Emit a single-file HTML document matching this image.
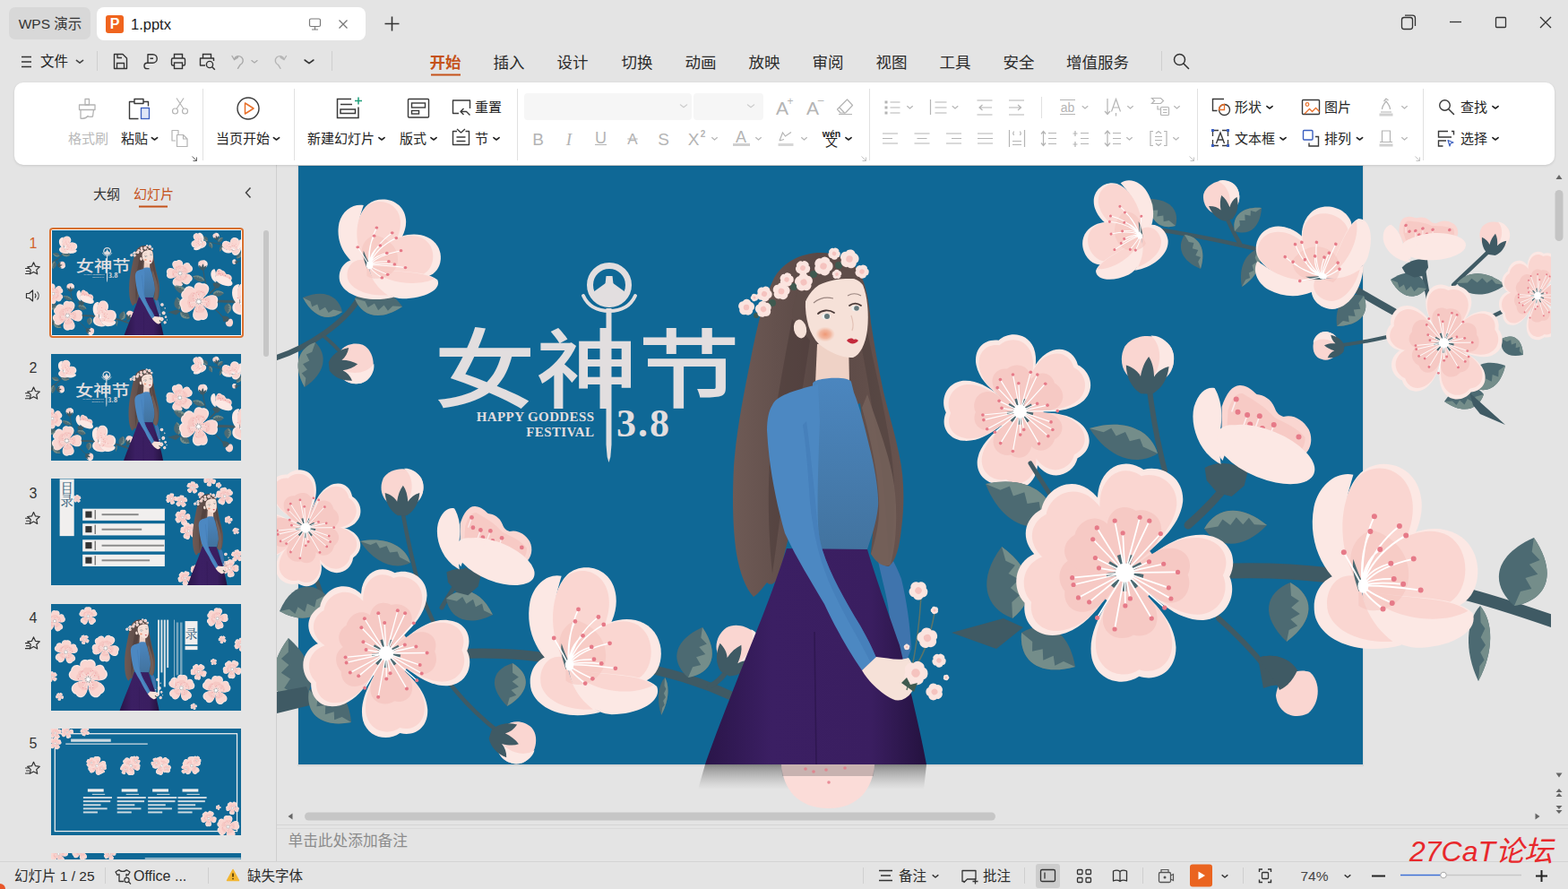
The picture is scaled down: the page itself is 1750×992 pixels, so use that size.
<!DOCTYPE html>
<html lang="zh-CN"><head><meta charset="utf-8"><title>1.pptx - WPS 演示</title>
<style>

*{box-sizing:border-box;margin:0;padding:0}
html,body{width:1750px;height:992px;overflow:hidden}
body{position:relative;background:#e4e4e4;font-family:"Liberation Sans","Noto Sans CJK SC",sans-serif;color:#2b2b2b;font-size:15px}
.abs{position:absolute}
.t{position:absolute;white-space:nowrap;line-height:1;transform:translateY(-50%)}
.vsep{position:absolute;width:1px;background:#d2d2d2}
svg{overflow:visible}
.ic{position:absolute;overflow:visible}
#tab1{left:10px;top:8px;width:91px;height:36px;background:#d8d8d8;border-radius:7px}
#tab2{left:108px;top:8px;width:300px;height:37px;background:#fff;border-radius:8px}
#picon{left:118px;top:17px;width:20px;height:20px;background:#f0641e;border-radius:3px;color:#fff;font-weight:bold;font-size:16px;text-align:center;line-height:20px}
.menu{font-size:17.5px;color:#2b2b2b}
.menu.act{color:#c5521a;font-weight:bold}
#ribbon{left:16px;top:92px;width:1719px;height:92px;background:#fff;border-radius:10px;box-shadow:0 1px 3px rgba(0,0,0,.12)}
.rl{font-size:15px;color:#222}
.rl.dis{color:#b9b9b9}
.fbox{position:absolute;background:#f6f6f6;border-radius:4px}
#leftpanel{left:0;top:184px;width:308px;height:776px;background:#e4e4e4}
#pdiv{left:308px;top:184px;width:1px;height:777px;background:#cfcfcf}
.tn{position:absolute;font-size:16px;color:#333;transform:translate(-50%,-50%);line-height:1}
#status{left:0;top:961px;width:1750px;height:31px;background:#e4e4e4;border-top:1px solid #d4d4d4}
.st{font-size:15.5px;color:#2b2b2b}
#notes{left:309px;top:920px;width:1441px;height:41px;background:#e4e4e4;border-top:1px solid #d4d4d4;box-shadow:inset 0 3px 0 #e4e4e4,inset 0 4px 0 #dadada}

</style></head>
<body>
<svg width="0" height="0" style="position:absolute">
<defs>
<g id="f5"><path d="M0 0C-.05-.14-.41-.38-.39-.72C-.37-.93-.2-1.02-.03-.95C.12-1.03.35-.96.38-.74C.41-.42.06-.14 0 0Z" transform="rotate(0)" fill="#fce8e4"/><path d="M0 0C-.05-.14-.41-.38-.39-.72C-.37-.93-.2-1.02-.03-.95C.12-1.03.35-.96.38-.74C.41-.42.06-.14 0 0Z" transform="rotate(80)" fill="#fce8e4"/><path d="M0 0C-.05-.14-.41-.38-.39-.72C-.37-.93-.2-1.02-.03-.95C.12-1.03.35-.96.38-.74C.41-.42.06-.14 0 0Z" transform="rotate(160)" fill="#fce8e4"/><path d="M0 0C-.05-.14-.41-.38-.39-.72C-.37-.93-.2-1.02-.03-.95C.12-1.03.35-.96.38-.74C.41-.42.06-.14 0 0Z" transform="rotate(238)" fill="#fce8e4"/><path d="M0 0C-.05-.14-.41-.38-.39-.72C-.37-.93-.2-1.02-.03-.95C.12-1.03.35-.96.38-.74C.41-.42.06-.14 0 0Z" transform="rotate(298)" fill="#fce8e4"/><path d="M0 0C-.05-.14-.41-.38-.39-.72C-.37-.93-.2-1.02-.03-.95C.12-1.03.35-.96.38-.74C.41-.42.06-.14 0 0Z" transform="rotate(0) translate(-.01 -.005) scale(.9 .93)" fill="#fad6d1"/><path d="M0 0C-.05-.14-.41-.38-.39-.72C-.37-.93-.2-1.02-.03-.95C.12-1.03.35-.96.38-.74C.41-.42.06-.14 0 0Z" transform="rotate(80) translate(-.01 -.005) scale(.9 .93)" fill="#fad6d1"/><path d="M0 0C-.05-.14-.41-.38-.39-.72C-.37-.93-.2-1.02-.03-.95C.12-1.03.35-.96.38-.74C.41-.42.06-.14 0 0Z" transform="rotate(160) translate(-.01 -.005) scale(.9 .93)" fill="#fad6d1"/><path d="M0 0C-.05-.14-.41-.38-.39-.72C-.37-.93-.2-1.02-.03-.95C.12-1.03.35-.96.38-.74C.41-.42.06-.14 0 0Z" transform="rotate(238) translate(-.01 -.005) scale(.9 .93)" fill="#fad6d1"/><path d="M0 0C-.05-.14-.41-.38-.39-.72C-.37-.93-.2-1.02-.03-.95C.12-1.03.35-.96.38-.74C.41-.42.06-.14 0 0Z" transform="rotate(298) translate(-.01 -.005) scale(.9 .93)" fill="#fad6d1"/><circle r=".3" fill="#fad6d1"/><g opacity=".6"><path d="M0 0C-.05-.14-.41-.38-.39-.72C-.37-.93-.2-1.02-.03-.95C.12-1.03.35-.96.38-.74C.41-.42.06-.14 0 0Z" transform="rotate(0) scale(.64 .6)" fill="#f4c1bc"/><path d="M0 0C-.05-.14-.41-.38-.39-.72C-.37-.93-.2-1.02-.03-.95C.12-1.03.35-.96.38-.74C.41-.42.06-.14 0 0Z" transform="rotate(80) scale(.64 .6)" fill="#f4c1bc"/><path d="M0 0C-.05-.14-.41-.38-.39-.72C-.37-.93-.2-1.02-.03-.95C.12-1.03.35-.96.38-.74C.41-.42.06-.14 0 0Z" transform="rotate(160) scale(.64 .6)" fill="#f4c1bc"/><path d="M0 0C-.05-.14-.41-.38-.39-.72C-.37-.93-.2-1.02-.03-.95C.12-1.03.35-.96.38-.74C.41-.42.06-.14 0 0Z" transform="rotate(238) scale(.64 .6)" fill="#f4c1bc"/><path d="M0 0C-.05-.14-.41-.38-.39-.72C-.37-.93-.2-1.02-.03-.95C.12-1.03.35-.96.38-.74C.41-.42.06-.14 0 0Z" transform="rotate(298) scale(.64 .6)" fill="#f4c1bc"/></g><g id="stam"><path d="M0 0L0.167 0.034M0 0L0.106 0.133M0 0L-0.004 0.170M0 0L-0.113 0.127M0 0L-0.168 0.025M0 0L-0.145 -0.089M0 0L-0.054 -0.161M0 0L0.062 -0.158M0 0L0.149 -0.081" stroke="#4c6a72" stroke-width=".035" fill="none"/><path d="M0 0L0.480 -0.005M0 0L0.397 0.137M0 0L0.418 0.236M0 0L0.360 0.318M0 0L0.242 0.415M0 0L0.048 0.235M0 0L0.003 0.300M0 0L-0.093 0.512M0 0L-0.251 0.409M0 0L-0.324 0.267M0 0L-0.423 0.227M0 0L-0.467 0.110M0 0L-0.478 0.046M0 0L-0.236 -0.042M0 0L-0.269 -0.134M0 0L-0.291 -0.303M0 0L-0.254 -0.407M0 0L-0.092 -0.471M0 0L-0.019 -0.359M0 0L0.135 -0.502M0 0L0.222 -0.470M0 0L0.324 -0.354M0 0L0.219 -0.099M0 0L0.351 -0.079" stroke="#fff" stroke-width=".014" fill="none"/><g fill="#e67a88"><circle cx="0.480" cy="-0.005" r=".021"/><circle cx="0.397" cy="0.137" r=".021"/><circle cx="0.418" cy="0.236" r=".021"/><circle cx="0.360" cy="0.318" r=".021"/><circle cx="0.242" cy="0.415" r=".021"/><circle cx="0.048" cy="0.235" r=".021"/><circle cx="0.003" cy="0.300" r=".021"/><circle cx="-0.093" cy="0.512" r=".021"/><circle cx="-0.251" cy="0.409" r=".021"/><circle cx="-0.324" cy="0.267" r=".021"/><circle cx="-0.423" cy="0.227" r=".021"/><circle cx="-0.467" cy="0.110" r=".021"/><circle cx="-0.478" cy="0.046" r=".021"/><circle cx="-0.236" cy="-0.042" r=".021"/><circle cx="-0.269" cy="-0.134" r=".021"/><circle cx="-0.291" cy="-0.303" r=".021"/><circle cx="-0.254" cy="-0.407" r=".021"/><circle cx="-0.092" cy="-0.471" r=".021"/><circle cx="-0.019" cy="-0.359" r=".021"/><circle cx="0.135" cy="-0.502" r=".021"/><circle cx="0.222" cy="-0.470" r=".021"/><circle cx="0.324" cy="-0.354" r=".021"/><circle cx="0.219" cy="-0.099" r=".021"/><circle cx="0.351" cy="-0.079" r=".021"/></g><circle r=".085" fill="#fff"/></g></g>
<path id="po" d="M0 0C-.05-.14-.41-.38-.39-.72C-.37-.93-.2-1.02-.03-.95C.12-1.03.35-.96.38-.74C.41-.42.06-.14 0 0Z" fill="#fce8e4"/><path id="pm" d="M0 0C-.05-.14-.41-.38-.39-.72C-.37-.93-.2-1.02-.03-.95C.12-1.03.35-.96.38-.74C.41-.42.06-.14 0 0Z" transform="translate(-.01 -.005) scale(.9 .93)" fill="#fad6d1"/><path id="pi" d="M0 0C-.05-.14-.41-.38-.39-.72C-.37-.93-.2-1.02-.03-.95C.12-1.03.35-.96.38-.74C.41-.42.06-.14 0 0Z" transform="scale(.64 .6)" fill="#f4c1bc"/>
<g id="cup"><path d="M-6 10C-40-5-62-45-54-88C-48-114-28-128-10-124C-17-100-23-80-19-58C-15-35-8-15-6 10Z" fill="#fce8e4"/><path d="M0 0C-28-28-30-98-2-126C20-146 62-136 66-96C70-60 40-20 0 0Z" fill="#fce8e4"/><path d="M0 0C-28-28-30-98-2-124C18-140 52-130 56-94C60-60 36-20 0 0Z" fill="#fad6d1"/><path d="M0 0C20-50 70-76 105-58C136-42 136 6 110 21C80 36 30 25 0 0Z" fill="#fce8e4"/><path d="M0 0C20-48 66-72 96-56C122-40 120 4 98 18C74 30 30 24 0 0Z" fill="#fad6d1"/><path d="M0 4C40 16 100 8 123 30C131 50 100 69 60 69C30 67 4 40 0 4Z" fill="#fce8e4"/><path d="M0 4C40 16 96 10 118 28C90 44 30 40 0 4Z" fill="#fad6d1"/><path d="M-4-12C-40-22-60 8-52 36C-42 64 0 78 44 66C22 52 0 30-4-12Z" fill="#fce8e4"/><path d="M-4-10C-30-18-44 8-38 30C-30 52 0 64 34 62C16 48 0 28-4-10Z" fill="#fad6d1"/><path d="M-4 0C-22-25-12-58 12-62C38-54 58-30 50 0C42 26 12 34-4 22Z" fill="#f4c1bc" opacity=".5"/><path d="M-10-30C-6-18-2-8 4 4L-4 6C-8-6-12-18-10-30Z" fill="#4c6a72"/><path d="M0 0Q-1.3 -46.7 13.5 -77.6M0 0Q-2.9 -37.4 9 -60.7M0 0Q8.5 -40.8 41.5 -66.9M0 0Q11.1 -35.0 48.8 -56.4M0 0Q0.9 -26.5 19.8 -40.9M0 0Q-13.2 -24.6 -20.6 -37.5M0 0Q5.2 -17.8 31.9 -25.1M0 0Q14.1 -20.6 57.3 -30.2M0 0Q6.4 -8.3 35.3 -7.9M0 0Q10.0 -5.1 45.7 -2M0 0Q16.8 -1.4 65.2 4.8M0 0Q5.7 6.6 33.3 19.2M0 0Q2.1 10.1 23.1 25.7" stroke="#fff" stroke-width="1.9" fill="none"/><g fill="#e67a88"><circle cx="13.5" cy="-77.6" r="3"/><circle cx="9" cy="-60.7" r="3"/><circle cx="41.5" cy="-66.9" r="3"/><circle cx="48.8" cy="-56.4" r="3"/><circle cx="19.8" cy="-40.9" r="3"/><circle cx="-20.6" cy="-37.5" r="3"/><circle cx="31.9" cy="-25.1" r="3"/><circle cx="57.3" cy="-30.2" r="3"/><circle cx="35.3" cy="-7.9" r="3"/><circle cx="45.7" cy="-2" r="3"/><circle cx="65.2" cy="4.8" r="3"/><circle cx="33.3" cy="19.2" r="3"/><circle cx="23.1" cy="25.7" r="3"/></g><ellipse cx="1" cy="0" rx="6" ry="8" fill="#fff"/></g>
<g id="side"><path d="M-24 2C-10-6 10-4 24 6L20 22L6 34L-10 30L-22 16Z" fill="#3f5a64"/><path d="M-6-2C-30-14-41-45-36-66C-31-83-21-89-13-87C-6-75-4-60-6-45C-8-30-8-15-6-2Z" fill="#fce8e4"/><path d="M-5-30L-5-66C0-82 8-91 16-90C26-89 30-83 34-80C42-79 50-75 54-65C56-59 60-56 64-55C75-58 86-51 92-41C97-31 95-18 86-12L40 0Z" fill="#fad6d1"/><path d="M0-30L2-62C6-76 12-82 18-81C30-74 44-66 54-54C66-48 80-42 88-32C88-22 84-16 76-12L40 0Z" fill="#f4c1bc" opacity=".55"/><path d="M11.1 -74.5l-5 14M23.5 -56.9l-5 14M37.2 -55.7l-5 14M53.1 -45.9l-5 14M63.1 -27.1l-5 14" stroke="#fdeeee" stroke-width="1.6" fill="none"/><g fill="#e67a88"><circle cx="11.1" cy="-74.5" r="3"/><circle cx="12.9" cy="-60.3" r="3"/><circle cx="23.5" cy="-56.9" r="3"/><circle cx="26.6" cy="-46.6" r="3"/><circle cx="37.2" cy="-55.7" r="3"/><circle cx="40.3" cy="-42" r="3"/><circle cx="53.1" cy="-45.9" r="3"/><circle cx="55.2" cy="-33.4" r="3"/><circle cx="63.1" cy="-27.1" r="3"/><circle cx="80.9" cy="-32.6" r="3"/></g><ellipse cx="44" cy="-13" rx="58" ry="27" transform="rotate(22 44 -13)" fill="#fce8e4"/><path d="M-8-40C0-50 20-46 30-36C10-30 0-20-4-6C-12-14-12-30-8-40Z" fill="#fce8e4"/></g>
<g id="bud"><path d="M0 0C-.5 0-.66-.45-.5-.78C-.3-1.1.3-1.1.5-.78C.66-.45.5 0 0 0Z" fill="#fad6d1"/><path d="M0 0C.32-.25.34-.8.05-1.03C.3-1.05.6-.8.56-.5C.54-.2.3 0 0 0Z" fill="#fce8e4"/><path d="M-.12.22C-.32.1-.44-.1-.46-.38C-.32-.34-.2-.26-.14-.15C-.12-.32-.06-.47.02-.58C.1-.47.14-.32.15-.15C.22-.26.32-.34.46-.38C.44-.1.32.1.12.22Z" fill="#3f5a64"/></g>
<g id="leaf"><path d="M0 0C.2-.3.6-.34 1 0C.6.34.2.3 0 0Z" fill="#4c6a72"/><path d="M0 0C.2-.3.6-.34 1 0L.8-.02L.72-.12L.62-.03L.52-.14L.42-.03L.3-.12L.22-.02Z" fill="#748d8a"/></g>
<g id="mini"><ellipse cx="0.00" cy="-0.55" rx=".5" ry=".42" transform="rotate(0 0.00 -0.55)" fill="#fbe4df"/><ellipse cx="0.52" cy="-0.17" rx=".5" ry=".42" transform="rotate(72 0.52 -0.17)" fill="#fbe4df"/><ellipse cx="0.32" cy="0.44" rx=".5" ry=".42" transform="rotate(144 0.32 0.44)" fill="#fbe4df"/><ellipse cx="-0.32" cy="0.44" rx=".5" ry=".42" transform="rotate(216 -0.32 0.44)" fill="#fbe4df"/><ellipse cx="-0.52" cy="-0.17" rx=".5" ry=".42" transform="rotate(288 -0.52 -0.17)" fill="#fbe4df"/><circle r=".34" fill="#f5c3bf"/></g>
<g id="girl"><defs><linearGradient id="skg" x1="0" x2="1" y1="0" y2="0"><stop offset="0" stop-color="#2a1549"/><stop offset=".3" stop-color="#3b1f63"/><stop offset=".75" stop-color="#3a1e60"/><stop offset="1" stop-color="#24123f"/></linearGradient><linearGradient id="shg" x1="0" x2="0" y1="0" y2="1"><stop offset="0" stop-color="#4a4a4a" stop-opacity=".6"/><stop offset="1" stop-color="#8a8a8a" stop-opacity="0"/></linearGradient><linearGradient id="swg" x1="0" x2="0" y1="0" y2="1"><stop offset="0" stop-color="#4b86bf"/><stop offset="1" stop-color="#42739f"/></linearGradient><radialGradient id="blg"><stop offset="0" stop-color="#ee9470" stop-opacity=".95"/><stop offset=".55" stop-color="#f0a486" stop-opacity=".7"/><stop offset="1" stop-color="#f3b9a2" stop-opacity="0"/></radialGradient><linearGradient id="hrg" x1="0" x2="1" y1="0" y2="0"><stop offset="0" stop-color="#6e5a55"/><stop offset=".5" stop-color="#5a4845"/><stop offset="1" stop-color="#67534e"/></linearGradient></defs><path d="M975 600C990 610 1000 630 1006 646C1012 670 1016 700 1017 724L1010 742L992 736C996 716 994 690 990 670C986 650 980 630 975 600Z" fill="#3f74ad"/><path d="M912 282C888 284 872 296 864 310C852 335 846 360 838 400C830 440 822 480 819 520C817 560 818 590 822 618C826 640 832 656 841 666C847 662 851 656 856 650C860 654 866 652 870 640L880 600L905 470L960 450L975 580C974 600 972 615 972 618C978 626 986 632 992 632C1000 626 1004 610 1006 590C1010 560 1009 530 1003 505C998 480 990 455 986 437C980 410 976 385 972 360C970 335 966 315 958 302C948 288 932 281 912 282Z" fill="url(#hrg)"/><path d="M884 356C876 400 866 450 860 500C856 550 858 600 862 640C868 600 872 560 880 520C890 470 898 420 904 380Z" fill="#4a3b39" opacity=".55"/><path d="M968 370C976 410 986 450 994 500C1000 540 1000 590 992 628C990 590 988 550 982 510C976 470 968 420 962 390Z" fill="#4a3b39" opacity=".45"/><path d="M912 384L947 380L948 428L910 428Z" fill="#efd2c6"/><path d="M899 335C903 320 914 311 930 309C946 307 958 311 963 318C968 330 970 350 968 368C966 384 960 396 952 399C942 400 926 394 914 384C904 374 898 356 899 335Z" fill="#f6e1d8"/><ellipse cx="893" cy="367" rx="7" ry="10.5" transform="rotate(-12 893 367)" fill="#f6e1d8"/><path d="M962 312C950 298 925 296 908 304C894 312 886 330 884 352C886 356 890 356 894 354C896 340 902 326 914 318C930 310 950 310 962 312Z" fill="#5f4d49"/><ellipse cx="921" cy="373" rx="11" ry="8.5" fill="url(#blg)"/><path d="M913 350c4-4 12-5 18-1M948 341c4-3 9-3 13 0" stroke="#4a3a38" stroke-width="1.8" fill="none" stroke-linecap="round"/><path d="M908 338c6-5 14-7 22-5M946 330c5-3 10-3 15 0" stroke="#9b8680" stroke-width="1.1" fill="none"/><ellipse cx="922" cy="353" rx="5" ry="3.6" fill="#eef0ee"/><ellipse cx="955" cy="344" rx="4.500" ry="3.200" fill="#eef0ee"/><circle cx="923" cy="353" r="3" fill="#66777a"/><circle cx="956" cy="344" r="2.800" fill="#66777a"/><path d="M945 380c3-3 6-3 8-1 2-1 4 0 5 1-3 4-9 5-13 0z" fill="#c42a3c"/><path d="M950 352c2 6 3 12 1 17" stroke="#e3c2b6" stroke-width="1.2" fill="none"/><path d="M907 428C908 421 948 419 950 426L953 438C960 455 966 480 972 505C978 530 981 555 980 565C978 585 972 600 968 613L915 613L890 470L880 450C888 444 898 440 907 436Z" fill="url(#swg)"/><path d="M878 612L968 613C976 640 990 680 1004 720C1016 770 1028 820 1034 853L787 853C800 815 830 740 850 690C862 660 872 630 878 612Z" fill="url(#skg)"/><path d="M909 705L911 853" stroke="#2a1549" stroke-width="1.5" opacity=".7"/><path d="M787 853H1034L1031 881H779Z" fill="url(#shg)"/><path d="M872 853C874 880 890 902 925 902C958 902 974 880 976 853Z" fill="#fbdcd8"/><path d="M872 853H976L975 866H873Z" fill="#8a7f80" opacity=".45"/><g fill="#e67a88" opacity=".8"><circle cx="899" cy="858" r="1.800"/><circle cx="908" cy="861" r="1.800"/><circle cx="922" cy="859" r="1.800"/><circle cx="943" cy="857" r="1.800"/><circle cx="925" cy="873" r="1.800"/></g><path d="M968 440C978 470 990 500 996 530C1002 560 1002 600 994 630C986 634 978 628 972 618C978 600 982 580 981 560C980 530 972 490 962 455Z" fill="#74605a" opacity=".9"/><path d="M862 452C866 442 884 436 913 429L915 470C913 520 912 560 913 585C914 600 916 607 918 614C926 640 944 672 960 698C968 712 974 724 978 734L962 748C950 730 936 708 920 674C906 650 890 625 876 595C866 560 858 520 856 480C856 468 858 458 862 452Z" fill="#4c88c2"/><path d="M900 470C904 500 907 530 910 560C912 585 914 600 918 614C926 640 944 672 960 698C968 712 974 724 978 734L972 740C960 715 944 690 930 660C916 630 908 600 904 560C902 530 900 500 896 474Z" fill="#3f78b4" opacity=".5"/><path d="M962 748L978 733C990 734 1004 738 1014 734C1020 742 1024 756 1020 768C1014 780 1004 784 996 780C984 774 970 762 962 748Z" fill="#f6e1d8"/><g fill="#3f5a50"><circle cx="862" cy="338" r="4"/><circle cx="886" cy="320" r="4"/><circle cx="908" cy="306" r="4"/><circle cx="936" cy="296" r="4"/><circle cx="844" cy="352" r="3"/></g><use href="#mini" transform="translate(833 343) rotate(5) scale(9.5)"/><use href="#mini" transform="translate(852 345) rotate(60) scale(9.5)"/><use href="#mini" transform="translate(853 328) rotate(25) scale(9)"/><use href="#mini" transform="translate(872 325) rotate(8) scale(10)"/><use href="#mini" transform="translate(878 312) rotate(14) scale(8)"/><use href="#mini" transform="translate(897 315) rotate(69) scale(10.5)"/><use href="#mini" transform="translate(896 299) rotate(32) scale(8.5)"/><use href="#mini" transform="translate(919 297) rotate(19) scale(11)"/><use href="#mini" transform="translate(931 283) rotate(31) scale(7)"/><use href="#mini" transform="translate(948 289) rotate(12) scale(11)"/><use href="#mini" transform="translate(962 303) rotate(26) scale(8)"/><use href="#mini" transform="translate(934 306) rotate(70) scale(5.5)"/><use href="#mini" transform="translate(842 332) rotate(50) scale(4.5)"/><path d="M1012 770C1020 740 1026 700 1028 665M1024 740C1034 725 1040 700 1043 684" stroke="#5d7468" stroke-width="1.500" fill="none"/><use href="#mini" transform="translate(1025 659) rotate(37) scale(11)"/><use href="#mini" transform="translate(1043 681) rotate(55) scale(4.5)"/><use href="#mini" transform="translate(1035 712) rotate(63) scale(12)"/><use href="#mini" transform="translate(1048 737) rotate(32) scale(8)"/><use href="#mini" transform="translate(1022 751) rotate(22) scale(14)"/><use href="#mini" transform="translate(1043 772) rotate(55) scale(10)"/><use href="#mini" transform="translate(1056 756) rotate(24) scale(3.5)"/><use href="#mini" transform="translate(1012 722) rotate(68) scale(3.5)"/><path d="M1006 762l6-6 4 8 8-2-4 10z" fill="#3f5a50"/></g>
<g id="slideart">
<path d="M404 326C396 344 382 358 362 372C342 386 324 394 309 399" stroke="#3f5a64" stroke-width="6" fill="none" stroke-linecap="round" stroke-linejoin="round"/><path d="M360 374C370 382 378 390 384 398" stroke="#3f5a64" stroke-width="4" fill="none" stroke-linecap="round" stroke-linejoin="round"/><use href="#leaf" transform="translate(382 348) rotate(-160) scale(46.8 51.5)"/><use href="#leaf" transform="translate(396 333) rotate(9.6) scale(53.8 -61.8)"/><use href="#leaf" transform="translate(352 382) rotate(103.5) scale(51.4 -56.6)"/><use href="#bud" transform="translate(376 408) rotate(84) scale(40)"/><use href="#cup" transform="translate(412 296) scale(0.62 0.54)"/><path d="M448 562C452 590 458 615 464 640C470 665 480 690 495 715" stroke="#3f5a64" stroke-width="4.5" fill="none" stroke-linecap="round" stroke-linejoin="round"/><path d="M493 678C502 662 512 648 520 636" stroke="#3f5a64" stroke-width="5" fill="none" stroke-linecap="round" stroke-linejoin="round"/><path d="M350 638C354 650 358 662 364 676" stroke="#3f5a64" stroke-width="5" fill="none" stroke-linecap="round" stroke-linejoin="round"/><use href="#leaf" transform="translate(458 628) rotate(-156.8) scale(60.9 -48.7)"/><use href="#leaf" transform="translate(498 668) rotate(19.1) scale(55 66)"/><use href="#leaf" transform="translate(364 664) rotate(160.9) scale(55 71.5)"/><use href="#bud" transform="translate(449 566) scale(42)"/><use href="#side" transform="translate(517.6 637) scale(0.8)"/><g transform="translate(341 589) scale(66)"><use href="#po" transform="rotate(-17)"/><use href="#po" transform="rotate(58)"/><use href="#po" transform="rotate(124)"/><use href="#po" transform="rotate(190)"/><use href="#po" transform="rotate(260)"/><use href="#pm" transform="rotate(-17)"/><use href="#pm" transform="rotate(58)"/><use href="#pm" transform="rotate(124)"/><use href="#pm" transform="rotate(190)"/><use href="#pm" transform="rotate(260)"/><circle r=".3" fill="#fad6d1"/><g opacity=".6"><use href="#pi" transform="rotate(-17)"/><use href="#pi" transform="rotate(58)"/><use href="#pi" transform="rotate(124)"/><use href="#pi" transform="rotate(190)"/><use href="#pi" transform="rotate(260)"/></g><use href="#stam"/></g><path d="M500 730C540 728 580 728 620 736" stroke="#3f5a64" stroke-width="11" fill="none" stroke-linecap="round" stroke-linejoin="round"/><path d="M700 742C740 748 780 760 815 776" stroke="#3f5a64" stroke-width="10" fill="none" stroke-linecap="round" stroke-linejoin="round"/><path d="M500 760C515 780 535 800 558 818" stroke="#3f5a64" stroke-width="4.5" fill="none" stroke-linecap="round" stroke-linejoin="round"/><use href="#leaf" transform="translate(330 790) rotate(-95.9) scale(78.4 86.3)"/><path d="M309 772L342 766L350 786L309 796Z" fill="#3f5a64"/><use href="#leaf" transform="translate(345 770) rotate(37.5) scale(59.2 -77)"/><use href="#leaf" transform="translate(572 740) rotate(97.1) scale(48.4 72.6)"/><use href="#leaf" transform="translate(768 756) rotate(-74.1) scale(58.2 -81.5)"/><use href="#leaf" transform="translate(742 756) rotate(95.4) scale(42.2 21.1)"/><use href="#bud" transform="translate(556 822) rotate(108) scale(42)"/><g transform="translate(431 729) scale(95)"><use href="#po" transform="rotate(8)"/><use href="#po" transform="rotate(90)"/><use href="#po" transform="rotate(172)"/><use href="#po" transform="rotate(250)"/><use href="#po" transform="rotate(307)"/><use href="#pm" transform="rotate(8)"/><use href="#pm" transform="rotate(90)"/><use href="#pm" transform="rotate(172)"/><use href="#pm" transform="rotate(250)"/><use href="#pm" transform="rotate(307)"/><circle r=".3" fill="#fad6d1"/><g opacity=".6"><use href="#pi" transform="rotate(8)"/><use href="#pi" transform="rotate(90)"/><use href="#pi" transform="rotate(172)"/><use href="#pi" transform="rotate(250)"/><use href="#pi" transform="rotate(307)"/></g><use href="#stam"/></g><use href="#cup" transform="translate(634.7 742) scale(0.8)"/><path d="M812 748C806 756 800 762 792 766" stroke="#3f5a64" stroke-width="6" fill="none" stroke-linecap="round" stroke-linejoin="round"/><use href="#bud" transform="translate(814 743) rotate(28) scale(46)"/>
<path d="M1298 257C1330 262 1370 270 1420 282" stroke="#3f5a64" stroke-width="4.5" fill="none" stroke-linecap="round" stroke-linejoin="round"/><path d="M1368 240C1372 250 1378 262 1384 272" stroke="#3f5a64" stroke-width="4.5" fill="none" stroke-linecap="round" stroke-linejoin="round"/><path d="M1505 318C1520 328 1538 338 1556 348" stroke="#3f5a64" stroke-width="8" fill="none" stroke-linecap="round" stroke-linejoin="round"/><path d="M1588 296C1590 310 1592 325 1596 340" stroke="#3f5a64" stroke-width="5" fill="none" stroke-linecap="round" stroke-linejoin="round"/><path d="M1664 278C1650 292 1634 306 1622 318" stroke="#3f5a64" stroke-width="4.5" fill="none" stroke-linecap="round" stroke-linejoin="round"/><path d="M1490 386C1510 384 1530 380 1548 376" stroke="#3f5a64" stroke-width="4" fill="none" stroke-linecap="round" stroke-linejoin="round"/><path d="M1650 360C1662 355 1672 350 1680 346" stroke="#3f5a64" stroke-width="4.5" fill="none" stroke-linecap="round" stroke-linejoin="round"/><use href="#leaf" transform="translate(1312 252) rotate(-135) scale(42.4 50.9)"/><use href="#leaf" transform="translate(1322 262) rotate(64.7) scale(42 46.3)"/><use href="#leaf" transform="translate(1378 258) rotate(-40.9) scale(39.7 47.6)"/><use href="#leaf" transform="translate(1404 278) rotate(113.2) scale(45.7 36.6)"/><use href="#leaf" transform="translate(1522 330) rotate(131.4) scale(45.3 58.9)"/><use href="#leaf" transform="translate(1592 322) rotate(-166) scale(41.2 53.6)"/><use href="#leaf" transform="translate(1626 316) rotate(2.1) scale(54 48.6)"/><use href="#leaf" transform="translate(1676 378) rotate(36.9) scale(30 42)"/><use href="#leaf" transform="translate(1640 430) rotate(-28.8) scale(45.7 -59.3)"/><use href="#leaf" transform="translate(1656 440) rotate(169.7) scale(44.7 53.7)"/><path d="M1640 438L1680 474L1652 462L1644 452Z" fill="#3f5a64"/><use href="#bud" transform="translate(1369 238) rotate(-18) scale(36)"/><use href="#bud" transform="translate(1666 278) rotate(8) scale(30)"/><use href="#bud" transform="translate(1494 388) rotate(-82) scale(28)"/><use href="#side" transform="translate(1578 292) rotate(-22) scale(0.62 0.55)"/><use href="#cup" transform="translate(1272.4 262.6) rotate(-25) scale(-.5 .5)"/><use href="#cup" transform="translate(1476 308.7) rotate(-72) scale(0.6)"/><use href="#f5" transform="translate(1716 330) rotate(10) scale(44.00 50.00)"/><g transform="translate(1611.5 382.5) scale(66)"><use href="#po" transform="rotate(7)"/><use href="#po" transform="rotate(78)"/><use href="#po" transform="rotate(153)"/><use href="#po" transform="rotate(230)"/><use href="#po" transform="rotate(291)"/><use href="#pm" transform="rotate(7)"/><use href="#pm" transform="rotate(78)"/><use href="#pm" transform="rotate(153)"/><use href="#pm" transform="rotate(230)"/><use href="#pm" transform="rotate(291)"/><circle r=".3" fill="#fad6d1"/><g opacity=".6"><use href="#pi" transform="rotate(7)"/><use href="#pi" transform="rotate(78)"/><use href="#pi" transform="rotate(153)"/><use href="#pi" transform="rotate(230)"/><use href="#pi" transform="rotate(291)"/></g><use href="#stam"/></g><path d="M1282 428C1286 460 1292 495 1300 525" stroke="#3f5a64" stroke-width="6" fill="none" stroke-linecap="round" stroke-linejoin="round"/><path d="M1370 540C1358 556 1342 572 1326 586" stroke="#3f5a64" stroke-width="9" fill="none" stroke-linecap="round" stroke-linejoin="round"/><use href="#leaf" transform="translate(1292 506) rotate(-159.8) scale(81 -72.9)"/><use href="#bud" transform="translate(1280 428) rotate(2) scale(52)"/><use href="#side" transform="translate(1368.6 520) scale(1)"/><g transform="translate(1138.5 459) scale(87)"><use href="#po" transform="rotate(-15)"/><use href="#po" transform="rotate(53)"/><use href="#po" transform="rotate(131)"/><use href="#po" transform="rotate(194)"/><use href="#po" transform="rotate(271)"/><use href="#pm" transform="rotate(-15)"/><use href="#pm" transform="rotate(53)"/><use href="#pm" transform="rotate(131)"/><use href="#pm" transform="rotate(194)"/><use href="#pm" transform="rotate(271)"/><circle r=".3" fill="#fad6d1"/><g opacity=".6"><use href="#pi" transform="rotate(-15)"/><use href="#pi" transform="rotate(53)"/><use href="#pi" transform="rotate(131)"/><use href="#pi" transform="rotate(194)"/><use href="#pi" transform="rotate(271)"/></g><use href="#stam"/></g><path d="M1375 637C1410 636 1450 638 1485 642" stroke="#3f5a64" stroke-width="17" fill="none" stroke-linecap="round" stroke-linejoin="round"/><path d="M1632 662C1665 670 1700 682 1735 694" stroke="#3f5a64" stroke-width="14" fill="none" stroke-linecap="round" stroke-linejoin="round"/><path d="M1360 690C1378 706 1396 724 1412 744" stroke="#3f5a64" stroke-width="6" fill="none" stroke-linecap="round" stroke-linejoin="round"/><path d="M1150 517C1158 530 1166 542 1172 552" stroke="#3f5a64" stroke-width="5" fill="none" stroke-linecap="round" stroke-linejoin="round"/><use href="#leaf" transform="translate(1178 582) rotate(-151.7) scale(88.6 -88.6)"/><use href="#leaf" transform="translate(1130 690) rotate(-98.5) scale(80.9 -97.1)"/><path d="M1062 706L1120 690L1142 700L1112 724Z" fill="#3f5a64"/><use href="#leaf" transform="translate(1140 706) rotate(32.3) scale(71 -92.3)"/><use href="#leaf" transform="translate(1344 590) rotate(-3.3) scale(70.1 77.1)"/><use href="#leaf" transform="translate(1440 650) rotate(93.5) scale(66.1 92.6)"/><use href="#leaf" transform="translate(1690 676) rotate(-73.9) scale(79.1 -110.8)"/><use href="#leaf" transform="translate(1652 676) rotate(91.4) scale(84 50.4)"/><path d="M1404 734C1420 728 1440 734 1448 748L1446 770C1436 764 1424 762 1410 768Z" fill="#3f5a64"/><path d="M1424 776C1426 756 1446 744 1462 750C1474 760 1474 784 1460 796C1444 804 1426 796 1424 776Z" fill="#fad6d1"/><path d="M1404 734C1420 728 1440 734 1448 748C1444 756 1440 764 1428 770C1424 760 1416 750 1404 734Z" fill="#3f5a64"/><g transform="translate(1255.5 639) scale(123)"><use href="#po" transform="rotate(12)"/><use href="#po" transform="rotate(94)"/><use href="#po" transform="rotate(174)"/><use href="#po" transform="rotate(255)"/><use href="#po" transform="rotate(309)"/><use href="#pm" transform="rotate(12)"/><use href="#pm" transform="rotate(94)"/><use href="#pm" transform="rotate(174)"/><use href="#pm" transform="rotate(255)"/><use href="#pm" transform="rotate(309)"/><circle r=".3" fill="#fad6d1"/><g opacity=".6"><use href="#pi" transform="rotate(12)"/><use href="#pi" transform="rotate(94)"/><use href="#pi" transform="rotate(174)"/><use href="#pi" transform="rotate(255)"/><use href="#pi" transform="rotate(309)"/></g><use href="#stam"/></g><use href="#cup" transform="translate(1520.4 653.8) scale(1)"/>
<text x="484" y="447" font-family="'Liberation Sans','Noto Sans CJK SC',sans-serif" font-weight="500" font-size="96" fill="#e2dedf" textLength="342" lengthAdjust="spacingAndGlyphs">女神节</text><path d="M676.500 344h6v152l-1.200 14-1.800 6-1.800-6-1.200-14z" fill="#e2dedf"/><circle cx="680" cy="318" r="21.500" fill="none" stroke="#e2dedf" stroke-width="7"/><path d="M662 326a19 19 0 0 0 36 0l-18-13z" fill="#e2dedf"/><path d="M676.500 308h7l3 26h-13z" fill="#e2dedf"/><path d="M651 330c6 13 17 17 29 17M709 330c-6 13-17 17-29 17" stroke="#e2dedf" stroke-width="4" fill="none" stroke-linecap="round"/><text x="663.500" y="470" text-anchor="end" font-family="'Liberation Serif',serif" font-weight="bold" font-size="15" letter-spacing=".4" fill="#e2dedf">HAPPY GODDESS</text><text x="663.500" y="487" text-anchor="end" font-family="'Liberation Serif',serif" font-weight="bold" font-size="15" letter-spacing=".4" fill="#e2dedf">FESTIVAL</text><text x="688" y="487" font-family="'Liberation Serif',serif" font-weight="bold" font-size="44" letter-spacing="2" fill="#e2dedf">3.8</text>
<use href="#girl"/>
</g>
</defs>
</svg>
<svg class="abs" style="left:309px;top:184px;overflow:hidden" width="1422" height="740" viewBox="309 184 1422 740"><rect x="332" y="184" width="1190" height="671" fill="#c9c9c9" opacity=".5"/><rect x="333" y="185" width="1188" height="668" fill="#0f6896"/><use href="#slideart"/></svg>
<svg class="ic" style="left:0;top:0" width="10" height="10"><path d="M1736.500 200l3.500-5 3.500 5z" fill="#666"/><rect x="1735.5" y="212" width="9" height="57" rx="4.5" fill="#c4c4c4"/><path d="M1736.500 862.500l3.500 5 3.500-5z" fill="#666"/><path d="M1736.500 884l3.500-4 3.500 4zM1736.500 889l3.500-4 3.500 4z" fill="#666"/><path d="M1736.500 899l3.500 4 3.500-4zM1736.500 904l3.500 4 3.500-4z" fill="#666"/><path d="M326.500 907.500l-5 3.500 5 3.500z" fill="#666"/><rect x="340" y="906.500" width="771" height="9" rx="4.500" fill="#c6c6c6"/><path d="M1713.500 907.500l5 3.500-5 3.500z" fill="#666"/></svg>
<div class="abs" id="notes"></div>
<div class="t " style="left:321.5px;top:938.8px;transform:translateY(-50%);font-size:16.7px;color:#8c8c8c">单击此处添加备注</div>
<div class="abs" id="leftpanel"></div>
<div class="t " style="left:119px;top:215.5px;transform:translate(-50%,-50%);font-size:15px;color:#333">大纲</div>
<div class="t " style="left:171.5px;top:215.5px;transform:translate(-50%,-50%);font-size:15px;color:#c5521a">幻灯片</div>
<svg class="ic" style="left:0;top:0" width="10" height="10"><path d="M155 230.500h32" stroke="#c5521a" stroke-width="2"/><path d="M279.500 209.500l-5 5.500 5 5.500" fill="none" stroke="#444" stroke-width="1.500"/><rect x="294" y="257" width="6" height="141" rx="3" fill="#c6c6c6"/><polygon points="37.5,292.8 39.5,297.2 44.3,297.8 40.7,301.1 41.7,305.8 37.5,303.4 33.3,305.8 34.3,301.1 30.7,297.8 35.5,297.2" fill="none" stroke="#333" stroke-width="1.2" stroke-linejoin="round"/><path d="M28 299.5h4M29 302.5h4M28 305.5h5" stroke="#333" stroke-width="1.1"/><polygon points="37.5,432.1 39.5,436.5 44.3,437.1 40.7,440.4 41.7,445.1 37.5,442.7 33.3,445.1 34.3,440.4 30.7,437.1 35.5,436.5" fill="none" stroke="#333" stroke-width="1.2" stroke-linejoin="round"/><path d="M28 438.8h4M29 441.8h4M28 444.8h5" stroke="#333" stroke-width="1.1"/><polygon points="37.5,571.5 39.5,575.9 44.3,576.5 40.7,579.8 41.7,584.5 37.5,582.1 33.3,584.5 34.3,579.8 30.7,576.5 35.5,575.9" fill="none" stroke="#333" stroke-width="1.2" stroke-linejoin="round"/><path d="M28 578.2h4M29 581.2h4M28 584.2h5" stroke="#333" stroke-width="1.1"/><polygon points="37.5,710.9 39.5,715.3 44.3,715.9 40.7,719.2 41.7,723.9 37.5,721.5 33.3,723.9 34.3,719.2 30.7,715.9 35.5,715.3" fill="none" stroke="#333" stroke-width="1.2" stroke-linejoin="round"/><path d="M28 717.6h4M29 720.6h4M28 723.6h5" stroke="#333" stroke-width="1.1"/><polygon points="37.5,850.3 39.5,854.7 44.3,855.3 40.7,858.6 41.7,863.3 37.5,860.9 33.3,863.3 34.3,858.6 30.7,855.3 35.5,854.7" fill="none" stroke="#333" stroke-width="1.2" stroke-linejoin="round"/><path d="M28 857.0h4M29 860.0h4M28 863.0h5" stroke="#333" stroke-width="1.1"/><path d="M29.500 327.500h3l4-3.500v12l-4-3.500h-3z" fill="none" stroke="#333" stroke-width="1.200" stroke-linejoin="round"/><path d="M39 327.500a4 4 0 0 1 0 5M41.500 325.500a7 7 0 0 1 0 9" fill="none" stroke="#333" stroke-width="1.100"/></svg>
<div class="tn" style="left:37px;top:272.0px;color:#d2622a">1</div>
<div class="tn" style="left:37px;top:411.3px;color:#333">2</div>
<div class="tn" style="left:37px;top:550.7px;color:#333">3</div>
<div class="tn" style="left:37px;top:690.1px;color:#333">4</div>
<div class="tn" style="left:37px;top:829.5px;color:#333">5</div>
<div class="abs" style="left:55px;top:254px;width:217px;height:123px;border:2px solid #d9702f;border-radius:4px;background:#fff"></div>
<svg class="abs" style="left:58px;top:257px;overflow:hidden" width="211" height="117" viewBox="333 185 1188 668" preserveAspectRatio="none"><rect x="333" y="185" width="1188" height="668" fill="#0f6896"/><use href="#slideart"/></svg>
<svg class="abs" style="left:57px;top:395px;overflow:hidden" width="212" height="119" viewBox="333 185 1188 668" preserveAspectRatio="none"><rect x="333" y="185" width="1188" height="668" fill="#0f6896"/><use href="#slideart"/></svg>
<svg class="abs" style="left:57px;top:534px;overflow:hidden" width="212" height="119" viewBox="333 185 1188 668" preserveAspectRatio="none"><rect x="333" y="185" width="1188" height="668" fill="#0f6896"/><use href="#f5" transform="translate(1086 312) rotate(6) scale(35.6)"/><use href="#f5" transform="translate(1148 328) rotate(68) scale(39.1)"/><use href="#f5" transform="translate(1218 242) rotate(66) scale(39.1)"/><use href="#f5" transform="translate(1326 196) rotate(30) scale(39.1)"/><use href="#f5" transform="translate(1419 296) rotate(51) scale(57.5)"/><use href="#f5" transform="translate(1156 428) rotate(4) scale(49.4)"/><use href="#f5" transform="translate(1194 514) rotate(42) scale(54)"/><use href="#f5" transform="translate(1443 444) rotate(3) scale(25.3)"/><use href="#f5" transform="translate(1489 514) rotate(49) scale(21.8)"/><use href="#f5" transform="translate(1497 669) rotate(57) scale(39.1)"/><use href="#f5" transform="translate(1451 747) rotate(11) scale(57.5)"/><use href="#f5" transform="translate(1233 755) rotate(9) scale(28.7)"/><use href="#f5" transform="translate(1171 809) rotate(19) scale(46)"/><use href="#f5" transform="translate(496 312) rotate(64) scale(25.3)"/><use href="#f5" transform="translate(410 483) rotate(50) scale(21.8)"/><use href="#f5" transform="translate(449 452) rotate(17) scale(21.8)"/><use href="#f5" transform="translate(1272 289) rotate(48) scale(21.8)"/><use href="#f5" transform="translate(1381 227) rotate(13) scale(18.4)"/><rect x="387" y="188" width="90" height="357" fill="#f1efee"/><text x="392" y="275" font-size="80" fill="#2d5a78" font-family="'Liberation Serif','Noto Serif CJK SC',serif">目</text><text x="392" y="355" font-size="80" fill="#2d5a78" font-family="'Liberation Serif','Noto Serif CJK SC',serif">录</text><rect x="530" y="374" width="514" height="74" fill="#f1efee"/><rect x="548" y="390" width="40" height="40" fill="#333"/><rect x="606" y="382" width="5" height="58" fill="#333"/><rect x="650" y="405" width="230" height="11" fill="#8a8a8a"/><rect x="530" y="467" width="514" height="74" fill="#f1efee"/><rect x="548" y="483" width="40" height="40" fill="#333"/><rect x="606" y="475" width="5" height="58" fill="#333"/><rect x="650" y="498" width="250" height="11" fill="#8a8a8a"/><rect x="530" y="568" width="514" height="74" fill="#f1efee"/><rect x="548" y="584" width="40" height="40" fill="#333"/><rect x="606" y="576" width="5" height="58" fill="#333"/><rect x="650" y="599" width="390" height="11" fill="#8a8a8a"/><rect x="530" y="661" width="514" height="74" fill="#f1efee"/><rect x="548" y="677" width="40" height="40" fill="#333"/><rect x="606" y="669" width="5" height="58" fill="#333"/><rect x="650" y="692" width="300" height="11" fill="#8a8a8a"/><use href="#girl" transform="translate(400 0)"/></svg>
<svg class="abs" style="left:57px;top:674px;overflow:hidden" width="212" height="119" viewBox="333 185 1188 668" preserveAspectRatio="none"><rect x="333" y="185" width="1188" height="668" fill="#0f6896"/><use href="#f5" transform="translate(356 292) rotate(68) scale(68.2)"/><use href="#f5" transform="translate(565 261) rotate(61) scale(59.4)"/><use href="#f5" transform="translate(542 408) rotate(38) scale(30.8)"/><use href="#f5" transform="translate(426 486) rotate(66) scale(77)"/><use href="#f5" transform="translate(674 462) rotate(26) scale(85.8)"/><use href="#f5" transform="translate(565 657) rotate(61) scale(127.6)"/><use href="#f5" transform="translate(387 765) rotate(27) scale(25.3)"/><use href="#f5" transform="translate(340 641) rotate(52) scale(34.1)"/><use href="#f5" transform="translate(1373 276) rotate(5) scale(68.2)"/><use href="#f5" transform="translate(1404 408) rotate(36) scale(25.3)"/><use href="#f5" transform="translate(1520 439) rotate(8) scale(42.9)"/><use href="#f5" transform="translate(1350 548) rotate(54) scale(20.9)"/><use href="#f5" transform="translate(1466 594) rotate(26) scale(59.4)"/><use href="#f5" transform="translate(1256 610) rotate(32) scale(51.7)"/><use href="#f5" transform="translate(1148 711) rotate(68) scale(85.8)"/><use href="#f5" transform="translate(1365 726) rotate(69) scale(93.5)"/><use href="#f5" transform="translate(1225 827) rotate(1) scale(20.9)"/><use href="#girl" transform="translate(-25 0)"/><rect x="1000" y="284" width="11" height="466" fill="#f1efee" opacity=".9"/><rect x="1019" y="284" width="11" height="330" fill="#f1efee" opacity=".9"/><rect x="1038" y="284" width="11" height="420" fill="#f1efee" opacity=".9"/><rect x="1057" y="284" width="11" height="300" fill="#f1efee" opacity=".9"/><rect x="1101" y="284" width="3" height="420" fill="#f1efee"/><rect x="1116" y="300" width="14" height="330" fill="#f1efee" opacity=".45"/><rect x="1140" y="300" width="14" height="330" fill="#f1efee" opacity=".45"/><rect x="1171" y="292" width="78" height="147" fill="#f1efee"/><rect x="1171" y="448" width="78" height="24" fill="#f1efee"/><text x="1172" y="400" font-size="76" fill="#2d5a78" font-family="'Liberation Serif','Noto Serif CJK SC',serif">录</text></svg>
<svg class="abs" style="left:57px;top:813px;overflow:hidden" width="212" height="119" viewBox="333 185 1188 668" preserveAspectRatio="none"><rect x="333" y="185" width="1188" height="668" fill="#0f6896"/><rect x="357" y="217" width="1139" height="611" fill="none" stroke="#f1efee" stroke-width="7"/><rect x="424" y="278" width="513" height="6" fill="#f1efee"/><rect x="457" y="250" width="250" height="18" fill="#f1efee" opacity=".85"/><use href="#f5" transform="translate(620 418) scale(60)"/><use href="#f5" transform="translate(586 400) scale(34)"/><use href="#f5" transform="translate(650 435) scale(30)"/><rect x="562" y="563" width="100" height="18" fill="#f1efee"/><rect x="590" y="594" width="80" height="5" fill="#f1efee"/><rect x="534" y="612" width="180" height="11" fill="#f1efee" opacity=".85"/><rect x="534" y="635" width="170" height="11" fill="#f1efee" opacity=".85"/><rect x="534" y="658" width="110" height="11" fill="#f1efee" opacity=".85"/><rect x="534" y="681" width="150" height="11" fill="#f1efee" opacity=".85"/><rect x="534" y="704" width="90" height="11" fill="#f1efee" opacity=".85"/><use href="#f5" transform="translate(832 418) rotate(20) scale(60)"/><use href="#f5" transform="translate(798 440) rotate(50) scale(34)"/><use href="#f5" transform="translate(862 385) rotate(31) scale(30)"/><rect x="774" y="563" width="100" height="18" fill="#f1efee"/><rect x="802" y="594" width="80" height="5" fill="#f1efee"/><rect x="746" y="612" width="180" height="11" fill="#f1efee" opacity=".85"/><rect x="746" y="635" width="170" height="11" fill="#f1efee" opacity=".85"/><rect x="746" y="658" width="110" height="11" fill="#f1efee" opacity=".85"/><rect x="746" y="681" width="150" height="11" fill="#f1efee" opacity=".85"/><rect x="746" y="704" width="90" height="11" fill="#f1efee" opacity=".85"/><use href="#f5" transform="translate(1025 418) rotate(40) scale(60)"/><use href="#f5" transform="translate(991 400) rotate(100) scale(34)"/><use href="#f5" transform="translate(1055 435) rotate(62) scale(30)"/><rect x="967" y="563" width="100" height="18" fill="#f1efee"/><rect x="995" y="594" width="80" height="5" fill="#f1efee"/><rect x="939" y="612" width="180" height="11" fill="#f1efee" opacity=".85"/><rect x="939" y="635" width="170" height="11" fill="#f1efee" opacity=".85"/><rect x="939" y="658" width="110" height="11" fill="#f1efee" opacity=".85"/><rect x="939" y="681" width="150" height="11" fill="#f1efee" opacity=".85"/><rect x="939" y="704" width="90" height="11" fill="#f1efee" opacity=".85"/><use href="#f5" transform="translate(1212 418) rotate(60) scale(60)"/><use href="#f5" transform="translate(1178 440) rotate(150) scale(34)"/><use href="#f5" transform="translate(1242 385) rotate(93) scale(30)"/><rect x="1154" y="563" width="100" height="18" fill="#f1efee"/><rect x="1182" y="594" width="80" height="5" fill="#f1efee"/><rect x="1126" y="612" width="180" height="11" fill="#f1efee" opacity=".85"/><rect x="1126" y="635" width="170" height="11" fill="#f1efee" opacity=".85"/><rect x="1126" y="658" width="110" height="11" fill="#f1efee" opacity=".85"/><rect x="1126" y="681" width="150" height="11" fill="#f1efee" opacity=".85"/><rect x="1126" y="704" width="90" height="11" fill="#f1efee" opacity=".85"/><use href="#f5" transform="translate(359 213) rotate(71) scale(40)"/><use href="#f5" transform="translate(434 208) rotate(2) scale(40)"/><use href="#f5" transform="translate(359 278) rotate(71) scale(40)"/><use href="#f5" transform="translate(545 203) rotate(41) scale(30)"/><use href="#f5" transform="translate(1319 749) rotate(23) scale(50)"/><use href="#f5" transform="translate(1440 800) scale(72)"/><use href="#f5" transform="translate(1468 683) rotate(28) scale(42)"/><use href="#f5" transform="translate(1379 679) rotate(11) scale(16)"/></svg>
<svg class="abs" style="left:57px;top:952px;overflow:hidden" width="212" height="119" viewBox="333 185 1188 668" preserveAspectRatio="none"><rect x="333" y="185" width="1188" height="668" fill="#0f6896"/><use href="#f5" transform="translate(380 190) scale(60)"/><use href="#f5" transform="translate(520 170) scale(60)"/><use href="#f5" transform="translate(700 190) scale(40)"/><rect x="920" y="215" width="600" height="6" fill="#f1efee"/></svg>
<div class="abs" style="left:0;top:958.5px;width:308px;height:3px;background:#e4e4e4"></div>
<div class="abs" id="pdiv"></div>
<div class="abs" id="tab1"></div>
<div class="t " style="left:56px;top:27px;transform:translate(-50%,-50%);font-size:15.5px;color:#333">WPS 演示</div>
<div class="abs" id="tab2"></div>
<div class="abs" id="picon">P</div>
<div class="t " style="left:146px;top:27px;transform:translateY(-50%);font-size:16.5px;color:#222">1.pptx</div>
<svg class="ic" style="left:0;top:0" width="1750" height="50"><rect x="345.5" y="21" width="12" height="8.5" rx="1.5" fill="none" stroke="#7a7a7a" stroke-width="1.2"/><path d="M351.5 29.5v3M348 33h7" stroke="#7a7a7a" stroke-width="1.2" fill="none"/><path d="M378.5 22.5l9 9M387.5 22.5l-9 9" stroke="#777" stroke-width="1.3" fill="none"/><path d="M429.5 26.5h16M437.5 18.5v16" stroke="#333" stroke-width="1.6" fill="none"/><rect x="1564.5" y="19.5" width="12" height="13" rx="2.5" fill="none" stroke="#333" stroke-width="1.3"/><path d="M1568 17.2h8.5a3 3 0 0 1 3 3V29" fill="none" stroke="#333" stroke-width="1.3"/><path d="M1618 24.5h13" stroke="#333" stroke-width="1.3"/><rect x="1669.5" y="19.5" width="11" height="11" rx="1" fill="none" stroke="#333" stroke-width="1.3"/><path d="M1719 19l12 12M1731 19l-12 12" stroke="#333" stroke-width="1.3"/></svg>
<svg class="ic" style="left:0;top:0" width="1750" height="92"><path d="M24 63.5h11M24 69h11M24 74.5h11" stroke="#333" stroke-width="1.4"/><path d="M85.4 67.4 L89.0 70.2 L92.6 67.4" fill="none" stroke="#444" stroke-width="1.6" stroke-linecap="round" stroke-linejoin="round"/><path d="M108.5 57v22M370.5 57v22M1296.5 57v22" stroke="#cfcfcf" stroke-width="1"/><path d="M127.5 60.5h9.5l4.5 4.5v11.5h-14z" fill="none" stroke="#333" stroke-width="1.4" stroke-linejoin="round"/><path d="M130.5 76v-5.5h8V76M131 60.8v3.7h5" fill="none" stroke="#333" stroke-width="1.3"/><path d="M165 70.200V60.700H170.500A4.750 4.750 0 0 1 170.500 70.200H164.200A3.200 3.200 0 0 0 164.200 76.600H166.500M167.500 65.300h3.500" fill="none" stroke="#333" stroke-width="1.4" stroke-linejoin="round"/><path d="M194.5 65v-4.5h9V65" fill="none" stroke="#333" stroke-width="1.4"/><rect x="191.500" y="65" width="15" height="8" rx="1.5" fill="none" stroke="#333" stroke-width="1.4"/><rect x="194.5" y="70" width="9" height="6.5" fill="#e4e4e4" stroke="#333" stroke-width="1.4"/><path d="M226.5 65v-4.500h9V65" fill="none" stroke="#333" stroke-width="1.4"/><path d="M229 73h-5.500v-8h15v3" fill="none" stroke="#333" stroke-width="1.4" stroke-linejoin="round"/><circle cx="234" cy="72" r="3.6" fill="none" stroke="#333" stroke-width="1.4"/><path d="M236.800 74.800l3 3" stroke="#333" stroke-width="1.5"/><path d="M259 62.500l2.500 4 4-2.300M261.500 66a5 5 0 1 1 6.500 6.300l-2.500 4" fill="none" stroke="#a9a9a9" stroke-width="1.4" stroke-linecap="round"/><path d="M280.9 67.6 L284.0 70.0 L287.1 67.6" fill="none" stroke="#aaa" stroke-width="1.3" stroke-linecap="round" stroke-linejoin="round"/><path d="M319.500 62.500l-2.500 4-4-2.300M317 66a5 5 0 1 0-6.500 6.300l2.500 4" fill="none" stroke="#b5b5b5" stroke-width="1.4" stroke-linecap="round"/><path d="M340.1 67.0 L345.0 70.6 L349.9 67.0" fill="none" stroke="#333" stroke-width="1.6" stroke-linecap="round" stroke-linejoin="round"/><circle cx="1316.500" cy="66.500" r="6" fill="none" stroke="#333" stroke-width="1.5"/><path d="M1321 71l5.500 5.500" stroke="#333" stroke-width="1.6" stroke-linecap="round"/><path d="M481 83.500h33" stroke="#c5521a" stroke-width="2"/></svg>
<div class="t " style="left:45px;top:69px;transform:translateY(-50%);font-size:15.5px;color:#222">文件</div>
<div class="t menu act" style="left:497px;top:70.5px;transform:translate(-50%,-50%);">开始</div>
<div class="t menu" style="left:568px;top:70.5px;transform:translate(-50%,-50%);">插入</div>
<div class="t menu" style="left:639px;top:70.5px;transform:translate(-50%,-50%);">设计</div>
<div class="t menu" style="left:711px;top:70.5px;transform:translate(-50%,-50%);">切换</div>
<div class="t menu" style="left:782px;top:70.5px;transform:translate(-50%,-50%);">动画</div>
<div class="t menu" style="left:853px;top:70.5px;transform:translate(-50%,-50%);">放映</div>
<div class="t menu" style="left:924px;top:70.5px;transform:translate(-50%,-50%);">审阅</div>
<div class="t menu" style="left:995px;top:70.5px;transform:translate(-50%,-50%);">视图</div>
<div class="t menu" style="left:1066px;top:70.5px;transform:translate(-50%,-50%);">工具</div>
<div class="t menu" style="left:1137px;top:70.5px;transform:translate(-50%,-50%);">安全</div>
<div class="t menu" style="left:1225px;top:70.5px;transform:translate(-50%,-50%);">增值服务</div>
<div class="abs" id="ribbon"></div>
<div class="fbox" style="left:585px;top:104px;width:187px;height:30px"></div>
<div class="fbox" style="left:774px;top:104px;width:78px;height:30px"></div>
<svg class="ic" style="left:0;top:0" width="1750" height="190"><path d="M226.5 99v80" stroke="#e1e1e1" stroke-width="1"/><path d="M328.5 99v80" stroke="#e1e1e1" stroke-width="1"/><path d="M577.5 99v80" stroke="#e1e1e1" stroke-width="1"/><path d="M970.5 99v80" stroke="#e1e1e1" stroke-width="1"/><path d="M1336.5 99v80" stroke="#e1e1e1" stroke-width="1"/><path d="M1588.5 99v80" stroke="#e1e1e1" stroke-width="1"/><path d="M1162.500 108v24" stroke="#e1e1e1" stroke-width="1"/><path d="M214.5 174.5l5 5M219.5 175.5v4h-4" fill="none" stroke="#666" stroke-width="1"/><path d="M961.5 174.5l5 5M966.5 175.5v4h-4" fill="none" stroke="#c4c4c4" stroke-width="1"/><path d="M1327.5 174.5l5 5M1332.5 175.5v4h-4" fill="none" stroke="#c4c4c4" stroke-width="1"/><path d="M1579.5 174.5l5 5M1584.5 175.5v4h-4" fill="none" stroke="#c4c4c4" stroke-width="1"/><g fill="none" stroke="#b4b4b4" stroke-width="1.3" stroke-linejoin="round"><path d="M95 110.500h4.500v6.500h-4.500z"/><path d="M88.500 117h17.500v5.500h-17.500z"/><path d="M90 122.500v9.500c4 .8 6.500-.5 8-2.500 1 .8 2.500 1.200 5.500 .5l1-7.500"/></g><g fill="none" stroke="#3a3a3a" stroke-width="1.4" stroke-linejoin="round"><path d="M150 113.500h-5.500v19h10"/><path d="M160 113.500h5.500v5"/><path d="M150 110.500h10v5h-10z"/></g><rect x="157.500" y="120.500" width="9" height="12" fill="#dfe6f7" stroke="#3b5fc0" stroke-width="1.3"/><g fill="none" stroke="#b4b4b4" stroke-width="1.2"><circle cx="195.500" cy="124" r="3"/><circle cx="206.500" cy="124" r="3"/><path d="M197 121.500l8-12M205 121.500l-8-12"/></g><g fill="none" stroke="#b4b4b4" stroke-width="1.2" stroke-linejoin="round"><path d="M199 150v-4.500h-7v11.500h4"/><path d="M197.500 150.500h7l4.500 4.500v8.500h-11.500z"/><path d="M204.500 150.500v4.500h4.500"/></g><circle cx="277" cy="121" r="12" fill="none" stroke="#3a3a3a" stroke-width="1.4"/><path d="M273.500 115l9.500 6-9.500 6z" fill="none" stroke="#e8702a" stroke-width="1.5" stroke-linejoin="round"/><path d="M305.4 153.6 L308.5 156.0 L311.6 153.6" fill="none" stroke="#222" stroke-width="1.6" stroke-linecap="round" stroke-linejoin="round"/><g fill="none" stroke="#3a3a3a" stroke-width="1.5"><path d="M392 110.500h-15.500v21h23.500v-12"/><path d="M380 116.500h13M380 126.500h16.500v-4.500h-16.500z"/></g><path d="M396 112.500h8M400 108.500v8" stroke="#1e9e7a" stroke-width="1.5"/><path d="M422.9 153.6 L426.0 156.0 L429.1 153.6" fill="none" stroke="#222" stroke-width="1.6" stroke-linecap="round" stroke-linejoin="round"/><g fill="none" stroke="#3a3a3a" stroke-width="1.4"><rect x="455.500" y="110.500" width="23" height="20.500" rx="1"/><rect x="459.500" y="115" width="15" height="5"/><rect x="459.500" y="123.500" width="8" height="3.500"/></g><path d="M480.9 153.6 L484.0 156.0 L487.1 153.6" fill="none" stroke="#222" stroke-width="1.6" stroke-linecap="round" stroke-linejoin="round"/><g fill="none" stroke="#3a3a3a" stroke-width="1.4" stroke-linejoin="round"><path d="M512 126.500h-6.500v-14.500h19v9"/><path d="M524.500 128.500l-4-4h-6.500M517.500 121l-3.500 3.500 3.500 3.500"/></g><g fill="none" stroke="#3a3a3a" stroke-width="1.4" stroke-linejoin="round"><path d="M510 146.500h-4.500v15h18v-15h-4"/><path d="M510 144l4.500 4 4.500-4M509.500 153h10M509.500 157.500h10"/></g><path d="M550.9 153.6 L554.0 156.0 L557.1 153.6" fill="none" stroke="#222" stroke-width="1.6" stroke-linecap="round" stroke-linejoin="round"/><path d="M759.4 116.9 L763.0 119.7 L766.6 116.9" fill="none" stroke="#c9c9c9" stroke-width="1.2" stroke-linecap="round" stroke-linejoin="round"/><path d="M834.4 116.9 L838.0 119.7 L841.6 116.9" fill="none" stroke="#c9c9c9" stroke-width="1.2" stroke-linecap="round" stroke-linejoin="round"/><g fill="#b4b4b4"><rect x="987.5" y="112.500" width="3" height="3"/><rect x="987.5" y="118.500" width="3" height="3"/><rect x="987.5" y="124.500" width="3" height="3"/></g><path d="M993.500 114h11M993.500 120h11M993.500 126h11" stroke="#b4b4b4" stroke-width="1.2"/><path d="M1012.6 118.6 L1015.5 121.0 L1018.4 118.6" fill="none" stroke="#b8b8b8" stroke-width="1.3" stroke-linecap="round" stroke-linejoin="round"/><path d="M1038.500 111v17M1043.500 114h13M1043.500 120h13M1043.500 126h13" stroke="#b4b4b4" stroke-width="1.2" fill="none"/><path d="M1063.1 118.6 L1066.0 121.0 L1068.9 118.6" fill="none" stroke="#b8b8b8" stroke-width="1.3" stroke-linecap="round" stroke-linejoin="round"/><path d="M1090.500 112h17M1093 120h14M1096.500 117l-3.500 3 3.500 3M1090.500 128h17" stroke="#b4b4b4" stroke-width="1.2" fill="none"/><path d="M1126 112h17M1126 120h13M1136 117l3.500 3-3.500 3M1126 128h17" stroke="#b4b4b4" stroke-width="1.2" fill="none"/><path d="M1183 111.500h17M1183 127.500h17" stroke="#b4b4b4" stroke-width="1.2"/><path d="M1208.1 118.6 L1211.0 121.0 L1213.9 118.6" fill="none" stroke="#b8b8b8" stroke-width="1.3" stroke-linecap="round" stroke-linejoin="round"/><path d="M1236 110v17M1233 124l3 3.500 3-3.500M1240.500 124.500l5-14 5 14M1242.500 120h6.500M1245.500 126v3.500" stroke="#b4b4b4" stroke-width="1.2" fill="none"/><path d="M1258.6 118.6 L1261.5 121.0 L1264.4 118.6" fill="none" stroke="#b8b8b8" stroke-width="1.3" stroke-linecap="round" stroke-linejoin="round"/><path d="M1285.500 109.500h10l3 3-3 3h-10l3-3zM1292 118v4h4" stroke="#b4b4b4" stroke-width="1.200" fill="none"/><rect x="1295.500" y="119.500" width="9" height="9" rx="1" stroke="#b4b4b4" stroke-width="1.2" fill="none"/><path d="M1298 122.500h4.500M1298 125.500h4.500" stroke="#b4b4b4" stroke-width="1"/><path d="M1310.6 118.6 L1313.5 121.0 L1316.4 118.6" fill="none" stroke="#b8b8b8" stroke-width="1.3" stroke-linecap="round" stroke-linejoin="round"/><path d="M985.0 149.0h17M985.0 154.5h11M985.0 160.0h17" stroke="#b4b4b4" stroke-width="1.2" fill="none"/><path d="M1020.5 149.0h17M1023.5 154.5h11M1020.5 160.0h17" stroke="#b4b4b4" stroke-width="1.2" fill="none"/><path d="M1056.0 149.0h17M1062.0 154.5h11M1056.0 160.0h17" stroke="#b4b4b4" stroke-width="1.2" fill="none"/><path d="M1091.0 149.0h17M1091.0 154.5h17M1091.0 160.0h17" stroke="#b4b4b4" stroke-width="1.2" fill="none"/><path d="M1126.500 145v19M1143.500 145v19M1130 157.500h10M1130 161.500h10M1131.500 146.500c-1 1.500-1 3 0 4.500M1138.500 146.500c1 1.500 1 3 0 4.500" stroke="#b4b4b4" stroke-width="1.2" fill="none"/><path d="M1164.500 147v15M1162 149.500l2.500-3 2.500 3M1162 159.500l2.500 3 2.500-3M1170 148.500h9M1170 154.500h9M1170 160.500h9" stroke="#b4b4b4" stroke-width="1.2" fill="none"/><path d="M1200 146v6M1197.500 149h5M1200 158v6M1197.500 161h5M1206 148.500h9M1206 154.500h9M1206 160.500h9" stroke="#b4b4b4" stroke-width="1.2" fill="none"/><path d="M1236 146.500v16M1233 149.500l3-3.500 3 3.500M1233 159.500l3 3.500 3-3.500M1242 148.500h9M1242 154.500h9M1242 160.500h9" stroke="#b4b4b4" stroke-width="1.2" fill="none"/><path d="M1257.6 153.6 L1260.5 156.0 L1263.4 153.6" fill="none" stroke="#b8b8b8" stroke-width="1.3" stroke-linecap="round" stroke-linejoin="round"/><path d="M1287 146.500h-3v16h3M1299 146.500h3v16h-3M1289 152.500h8M1289 156.500h8M1290 149l3-2.500 3 2.500M1290 160l3 2.500 3-2.500" stroke="#b4b4b4" stroke-width="1.2" fill="none"/><path d="M1309.6 153.6 L1312.5 156.0 L1315.4 153.6" fill="none" stroke="#b8b8b8" stroke-width="1.3" stroke-linecap="round" stroke-linejoin="round"/><path d="M1366 110.500h-12.500v13h5" fill="none" stroke="#3a3a3a" stroke-width="1.400"/><circle cx="1366.500" cy="122.500" r="6" fill="none" stroke="#3a3a3a" stroke-width="1.400"/><path d="M1366.500 122.500v-6a6 6 0 0 0-6 6z" fill="none" stroke="#e8702a" stroke-width="1.300"/><path d="M1413.9 118.6 L1417.0 121.0 L1420.1 118.6" fill="none" stroke="#222" stroke-width="1.6" stroke-linecap="round" stroke-linejoin="round"/><rect x="1453.500" y="111.500" width="19" height="16" rx="1" fill="none" stroke="#3a3a3a" stroke-width="1.400"/><circle cx="1459" cy="116.500" r="1.800" fill="none" stroke="#e8702a" stroke-width="1.200"/><path d="M1456 127l5.500-5.500 3 3 4-4 4 4" fill="none" stroke="#e8702a" stroke-width="1.300"/><path d="M1541 125h12M1542.500 122c0-3 2-6 4.500-9 2.500 3 4.500 6 4.500 9M1544.500 113l2.500-3 2.500 2" fill="none" stroke="#b4b4b4" stroke-width="1.200"/><rect x="1539.500" y="126.500" width="15" height="3" fill="#d0d0d0"/><path d="M1564.6 118.6 L1567.5 121.0 L1570.4 118.6" fill="none" stroke="#b8b8b8" stroke-width="1.3" stroke-linecap="round" stroke-linejoin="round"/><rect x="1353.500" y="145.500" width="17" height="17" fill="none" stroke="#3a3a3a" stroke-width="1.300" stroke-dasharray="13 4" stroke-dashoffset="6.500"/><path d="M1357.500 160l4.500-12 4.500 12M1359 156h6" fill="none" stroke="#3a3a3a" stroke-width="1.400"/><g fill="#3b5fc0"><rect x="1352" y="144" width="3" height="3"/><rect x="1369" y="144" width="3" height="3"/><rect x="1352" y="161" width="3" height="3"/><rect x="1369" y="161" width="3" height="3"/></g><path d="M1428.9 153.6 L1432.0 156.0 L1435.1 153.6" fill="none" stroke="#222" stroke-width="1.6" stroke-linecap="round" stroke-linejoin="round"/><rect x="1454.500" y="145.500" width="10.500" height="10.500" rx="1" fill="none" stroke="#3b5fc0" stroke-width="1.400"/><path d="M1468 152.500h3.500v10.500h-10.500v-3.500" fill="none" stroke="#3a3a3a" stroke-width="1.400"/><path d="M1514.4 153.6 L1517.5 156.0 L1520.6 153.6" fill="none" stroke="#222" stroke-width="1.6" stroke-linecap="round" stroke-linejoin="round"/><path d="M1542.500 158v-12h9v12M1540 158.500h14" fill="none" stroke="#b4b4b4" stroke-width="1.200"/><rect x="1539.500" y="160.500" width="15" height="3" fill="#d0d0d0"/><path d="M1564.6 153.6 L1567.5 156.0 L1570.4 153.6" fill="none" stroke="#b8b8b8" stroke-width="1.3" stroke-linecap="round" stroke-linejoin="round"/><circle cx="1612.500" cy="117.500" r="5.800" fill="none" stroke="#3a3a3a" stroke-width="1.400"/><path d="M1617 122l5.500 5.500" stroke="#3a3a3a" stroke-width="1.500" stroke-linecap="round"/><path d="M1665.9 118.6 L1669.0 121.0 L1672.1 118.6" fill="none" stroke="#222" stroke-width="1.6" stroke-linecap="round" stroke-linejoin="round"/><path d="M1616 146.500h-10.500v6.500h14.500M1620 146.500h2.500v4M1614 157h-8.500v6h5" fill="none" stroke="#3a3a3a" stroke-width="1.400"/><path d="M1616 156.500l6 2.500-3 1-1 3z" fill="none" stroke="#3b5fc0" stroke-width="1.200" stroke-linejoin="round"/><path d="M1665.9 153.6 L1669.0 156.0 L1672.1 153.6" fill="none" stroke="#222" stroke-width="1.6" stroke-linecap="round" stroke-linejoin="round"/></svg>
<div class="t rl dis" style="left:76px;top:154px;transform:translateY(-50%);">格式刷</div>
<div class="t rl" style="left:135px;top:154px;transform:translateY(-50%);">粘贴</div>
<svg class="ic" style="left:0;top:0" width="10" height="10"><path d="M169.4 153.6 L172.5 156.0 L175.6 153.6" fill="none" stroke="#222" stroke-width="1.6" stroke-linecap="round" stroke-linejoin="round"/></svg>
<div class="t rl" style="left:241px;top:154px;transform:translateY(-50%);">当页开始</div>
<div class="t rl" style="left:343px;top:154px;transform:translateY(-50%);">新建幻灯片</div>
<div class="t rl" style="left:446px;top:154px;transform:translateY(-50%);">版式</div>
<div class="t rl" style="left:530px;top:119px;transform:translateY(-50%);">重置</div>
<div class="t rl" style="left:530px;top:154px;transform:translateY(-50%);">节</div>
<div class="t " style="left:600.5px;top:154.5px;transform:translate(-50%,-50%);color:#b4b4b4;font-size:19px">B</div>
<div class="t " style="left:635px;top:154.5px;transform:translate(-50%,-50%);color:#b4b4b4;font-size:19px;font-family:Liberation Serif,serif"><i>I</i></div>
<div class="t " style="left:670.5px;top:153.5px;transform:translate(-50%,-50%);color:#b4b4b4;font-size:19px;font-size:18px"><u>U</u></div>
<div class="t " style="left:706px;top:154.5px;transform:translate(-50%,-50%);color:#b4b4b4;font-size:19px;font-size:17px"><s>A</s></div>
<div class="t " style="left:740.5px;top:154.5px;transform:translate(-50%,-50%);color:#b4b4b4;font-size:19px">S</div>
<div class="t " style="left:774px;top:155px;transform:translate(-50%,-50%);color:#b4b4b4;font-size:19px">X</div>
<div class="t " style="left:784.5px;top:149.5px;transform:translate(-50%,-50%);color:#b4b4b4;font-size:10px;font-weight:bold">2</div>
<div class="t " style="left:827px;top:152.5px;transform:translate(-50%,-50%);color:#b4b4b4;font-size:19px;font-size:18px">A</div>
<div class="abs" style="left:818px;top:160px;width:19px;height:3px;background:#cfcfcf"></div>
<div class="t " style="left:873px;top:120px;transform:translate(-50%,-50%);color:#b4b4b4;font-size:19px;font-size:21px">A</div>
<div class="t " style="left:882px;top:113px;transform:translate(-50%,-50%);color:#b4b4b4;font-size:12px">+</div>
<div class="t " style="left:907px;top:120px;transform:translate(-50%,-50%);color:#b4b4b4;font-size:19px;font-size:21px">A</div>
<div class="t " style="left:916px;top:112px;transform:translate(-50%,-50%);color:#b4b4b4;font-size:12px">–</div>
<div class="t " style="left:1191.5px;top:119.5px;transform:translate(-50%,-50%);color:#b4b4b4;font-size:14px">ab</div>
<svg class="ic" style="left:0;top:0" width="10" height="10"><path d="M794.6 153.6 L797.5 156.0 L800.4 153.6" fill="none" stroke="#b8b8b8" stroke-width="1.3" stroke-linecap="round" stroke-linejoin="round"/><path d="M843.6 153.6 L846.5 156.0 L849.4 153.6" fill="none" stroke="#b8b8b8" stroke-width="1.3" stroke-linecap="round" stroke-linejoin="round"/><path d="M894.6 153.6 L897.5 156.0 L900.4 153.6" fill="none" stroke="#b8b8b8" stroke-width="1.3" stroke-linecap="round" stroke-linejoin="round"/><path d="M943.9 153.6 L947.0 156.0 L950.1 153.6" fill="none" stroke="#222" stroke-width="1.6" stroke-linecap="round" stroke-linejoin="round"/><path d="M945.500 111l6 6.500-8 8.500h-5.500l-3.500-4zM936.500 119.500l6.500 7M936 127.500h15" fill="none" stroke="#b4b4b4" stroke-width="1.200" stroke-linejoin="round"/><path d="M870 157l3.500-9 3 4 6.500-4.500M870 157l5-1.500" fill="none" stroke="#b4b4b4" stroke-width="1.200"/><path d="M868.500 161.500h17" stroke="#d6d6d6" stroke-width="3"/></svg>
<div class="t " style="left:928px;top:149px;transform:translate(-50%,-50%);font-size:10.5px;color:#222;font-weight:bold">wén</div>
<div class="t " style="left:928px;top:158px;transform:translate(-50%,-50%);font-size:14px;color:#222">文</div>
<div class="t rl" style="left:1378px;top:119px;transform:translateY(-50%);">形状</div>
<div class="t rl" style="left:1478px;top:119px;transform:translateY(-50%);">图片</div>
<div class="t rl" style="left:1378px;top:154px;transform:translateY(-50%);">文本框</div>
<div class="t rl" style="left:1478px;top:154px;transform:translateY(-50%);">排列</div>
<div class="t rl" style="left:1630px;top:119px;transform:translateY(-50%);">查找</div>
<div class="t rl" style="left:1630px;top:154px;transform:translateY(-50%);">选择</div>
<div class="abs" id="status"></div>
<div class="t st" style="left:16px;top:977.5px;transform:translateY(-50%);">幻灯片 1 / 25</div>
<div class="t st" style="left:149px;top:977.5px;transform:translateY(-50%);font-size:16px">Office ...</div>
<div class="t st" style="left:276px;top:977.5px;transform:translateY(-50%);">缺失字体</div>
<div class="t st" style="left:1003px;top:977.5px;transform:translateY(-50%);">备注</div>
<div class="t st" style="left:1097px;top:977.5px;transform:translateY(-50%);">批注</div>
<div class="t st" style="left:1467px;top:977.5px;transform:translate(-50%,-50%);color:#444">74%</div>
<svg class="ic" style="left:0;top:0" width="10" height="10"><path d="M117.5 968v18" stroke="#cfcfcf" stroke-width="1"/><path d="M232.5 968v18" stroke="#cfcfcf" stroke-width="1"/><path d="M963.5 968v18" stroke="#cfcfcf" stroke-width="1"/><path d="M1143.5 968v18" stroke="#cfcfcf" stroke-width="1"/><path d="M1275.5 968v18" stroke="#cfcfcf" stroke-width="1"/><path d="M1387.5 968v18" stroke="#cfcfcf" stroke-width="1"/><path d="M133 970.500l-4 2.500 2 3.500 2-1v8h5M141 970.500l4 2.500-2 3.500-2-1v3M133 970.500c1 2.500 7 2.500 8 0" fill="none" stroke="#333" stroke-width="1.300" stroke-linejoin="round"/><circle cx="141.500" cy="982" r="2.600" fill="none" stroke="#333" stroke-width="1.200"/><path d="M143.500 984l2.500 2.500" stroke="#333" stroke-width="1.300"/><path d="M260 970.500l6.500 12h-13z" fill="#f2b632" stroke="#f2b632" stroke-width="1.500" stroke-linejoin="round"/><path d="M260 974.500v4M260 980v1.200" stroke="#3a2a00" stroke-width="1.500"/><path d="M981 971.500h15M983 977h11M981 982.500h15" stroke="#333" stroke-width="1.400"/><path d="M1041.1 976.6 L1044.0 979.0 L1046.9 976.6" fill="none" stroke="#333" stroke-width="1.4" stroke-linecap="round" stroke-linejoin="round"/><path d="M1074 983.500v-12h15v9.500h-9.500l-3.500 3.500v-1z" fill="none" stroke="#333" stroke-width="1.300" stroke-linejoin="round"/><path d="M1085.500 983.500h6M1088.500 980.500v6" stroke="#333" stroke-width="1.300"/><rect x="1156" y="964" width="27" height="27" rx="3" fill="#cdcdcd"/><rect x="1161.500" y="970.500" width="16" height="13" rx="1.500" fill="none" stroke="#333" stroke-width="1.300"/><path d="M1166 973.500v7" stroke="#333" stroke-width="1.300"/><g fill="none" stroke="#333" stroke-width="1.300"><rect x="1202.500" y="970.500" width="5.500" height="5" rx="1"/><rect x="1212" y="970.500" width="5.500" height="5" rx="1"/><rect x="1202.500" y="979.500" width="5.500" height="5" rx="1"/><rect x="1212" y="979.500" width="5.500" height="5" rx="1"/></g><path d="M1250 972.500c-2-1.500-5-1.500-7.500-.5v11c2.500-1 5.500-1 7.500.5 2-1.500 5-1.500 7.500-.5v-11c-2.500-1-5.500-1-7.500.5zM1250 972.500v11" fill="none" stroke="#333" stroke-width="1.300" stroke-linejoin="round"/><rect x="1293.500" y="973.500" width="13" height="11" rx="1.500" fill="none" stroke="#555" stroke-width="1.300"/><path d="M1296 973.500v-3h8v3M1306.500 977l3-1.500v7l-3-1.500" fill="none" stroke="#555" stroke-width="1.200"/><circle cx="1300" cy="979" r="1.500" fill="#555"/><rect x="1328" y="964.500" width="25" height="25" rx="3" fill="#ea6420"/><path d="M1337.500 972.500l7.500 4.500-7.500 4.500z" fill="#fff"/><path d="M1364.1 976.6 L1367.0 979.0 L1369.9 976.6" fill="none" stroke="#333" stroke-width="1.4" stroke-linecap="round" stroke-linejoin="round"/><path d="M1405.500 973v-3h3.500M1415 970h3.500v3M1418.500 981.500v3h-3.500M1409 984.500h-3.500v-3" fill="none" stroke="#333" stroke-width="1.400"/><rect x="1408.500" y="973.500" width="7" height="7" rx="1" fill="none" stroke="#333" stroke-width="1.300"/><path d="M1501.1 976.6 L1504.0 979.0 L1506.9 976.6" fill="none" stroke="#333" stroke-width="1.4" stroke-linecap="round" stroke-linejoin="round"/><path d="M1531 977.500h15" stroke="#222" stroke-width="2"/><path d="M1563 976.500h48" stroke="#3d6fd6" stroke-width="1.600"/><path d="M1611 976.500h87" stroke="#c8c8c8" stroke-width="1.600"/><circle cx="1611" cy="976.500" r="3.300" fill="#fff" stroke="#aaa" stroke-width="1"/><path d="M1714 977.500h13M1720.500 971v13" stroke="#222" stroke-width="2"/></svg>
<div class="abs" style="left:-6px;top:986px;width:12px;height:12px;border-radius:6px;background:#e8562a"></div>
<div class="t " style="left:1573px;top:950px;transform:translateY(-50%);font-size:32px;color:#e8282c;font-style:italic;font-family:"Liberation Sans","Noto Sans CJK SC",sans-serif;letter-spacing:1.5px;transform:translateY(-50%) skewX(-6deg)">27CaT论坛</div>
</body></html>
